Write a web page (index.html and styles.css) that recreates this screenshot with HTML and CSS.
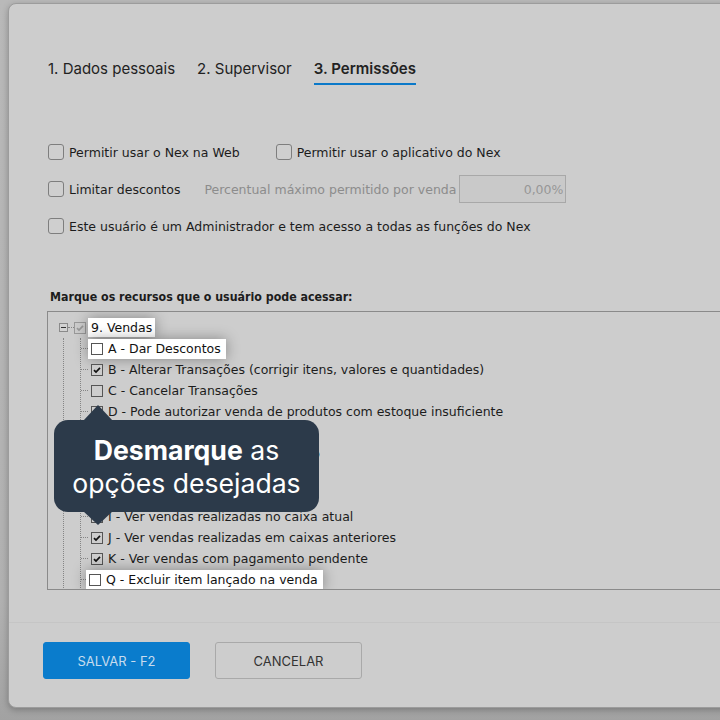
FILE: index.html
```html
<!DOCTYPE html>
<html lang="pt-BR">
<head>
  <meta charset="UTF-8" />
  <title>Usuário - Permissões</title>
  <link rel="stylesheet" href="styles.css">
</head>
<body>

  <div class="modal">
    <nav class="tabs">
      <span class="tab">1. Dados pessoais</span>
      <span class="tab">2. Supervisor</span>
      <span class="tab active">3. Permissões</span>
    </nav>

    <div class="options">
      <div class="opt-row">
        <label class="opt wide"><span class="box"></span>Permitir usar o Nex na Web</label>
        <label class="opt"><span class="box"></span>Permitir usar o aplicativo do Nex</label>
      </div>
      <div class="opt-row">
        <label class="opt"><span class="box"></span>Limitar descontos</label>
        <span class="muted">Percentual máximo permitido por venda</span>
        <input class="pct" type="text" value="0,00%" disabled>
      </div>
      <div class="opt-row">
        <label class="opt"><span class="box"></span>Este usuário é um Administrador e tem acesso a todas as funções do Nex</label>
      </div>
    </div>

    <p class="tree-title">Marque os recursos que o usuário pode acessar:</p>

    <div class="tree">
      <div class="row root">
        <span class="toggle"></span>
        <span class="dots short"></span>
        <span class="cb gray"><svg viewBox="0 0 11 11"><path d="M2.2 5.6 L4.4 7.8 L8.8 3.2"/></svg></span>
        <span class="label hl">9. Vendas</span>
      </div>
      <div class="branch">
        <div class="kids">
          <div class="row"><span class="dots"></span><span class="item hl"><span class="cb"></span>A - Dar Descontos</span></div>
          <div class="row"><span class="dots"></span><span class="item"><span class="cb"><svg viewBox="0 0 11 11"><path d="M2.2 5.6 L4.4 7.8 L8.8 3.2"/></svg></span>B - Alterar Transações (corrigir itens, valores e quantidades)</span></div>
          <div class="row"><span class="dots"></span><span class="item"><span class="cb"></span>C - Cancelar Transações</span></div>
          <div class="row"><span class="dots"></span><span class="item"><span class="cb"><svg viewBox="0 0 11 11"><path d="M2.2 5.6 L4.4 7.8 L8.8 3.2"/></svg></span>D - Pode autorizar venda de produtos com estoque insuficiente</span></div>
          <div class="row"><span class="dots"></span><span class="item"><span class="cb"><svg viewBox="0 0 11 11"><path d="M2.2 5.6 L4.4 7.8 L8.8 3.2"/></svg></span>E - Alterar preço de venda</span></div>
          <div class="row"><span class="dots"></span><span class="item"><span class="cb"><svg viewBox="0 0 11 11"><path d="M2.2 5.6 L4.4 7.8 L8.8 3.2"/></svg></span>F - Vender para cliente bloqueado</span></div>
          <div class="row"><span class="dots"></span><span class="item"><span class="cb"><svg viewBox="0 0 11 11"><path d="M2.2 5.6 L4.4 7.8 L8.8 3.2"/></svg></span>G - Alterar o vendedor do pedido</span></div>
          <div class="row"><span class="dots"></span><span class="item"><span class="cb"><svg viewBox="0 0 11 11"><path d="M2.2 5.6 L4.4 7.8 L8.8 3.2"/></svg></span>H - Reabrir vendas finalizadas</span></div>
          <div class="row"><span class="dots"></span><span class="item"><span class="cb"><svg viewBox="0 0 11 11"><path d="M2.2 5.6 L4.4 7.8 L8.8 3.2"/></svg></span>I - Ver vendas realizadas no caixa atual</span></div>
          <div class="row"><span class="dots"></span><span class="item"><span class="cb"><svg viewBox="0 0 11 11"><path d="M2.2 5.6 L4.4 7.8 L8.8 3.2"/></svg></span>J - Ver vendas realizadas em caixas anteriores</span></div>
          <div class="row"><span class="dots"></span><span class="item"><span class="cb"><svg viewBox="0 0 11 11"><path d="M2.2 5.6 L4.4 7.8 L8.8 3.2"/></svg></span>K - Ver vendas com pagamento pendente</span></div>
          <div class="row"><span class="dots"></span><span class="item hl last"><span class="cb"></span>Q - Excluir item lançado na venda</span></div>
        </div>
      </div>
    </div>

    <div class="hint">
      <strong>Desmarque</strong> as<br>opções desejadas
    </div>

    <div class="footer">
      <button class="btn primary">SALVAR - F2</button>
      <button class="btn">CANCELAR</button>
    </div>
  </div>

</body>
</html>
```

FILE: styles.css
```css
html, body {
  margin: 0;
  height: 720px;
  overflow: hidden;
}

body {
  background: linear-gradient(#b9b9b9, #b1b1b1 600px, #a2a2a2);
  font-family: "DejaVu Sans", sans-serif;
  color: #1c1c1c;
}

.modal {
  position: relative;
  margin: 3px 0 0 8px;
  width: 760px;
  height: 705px;
  background: #cdcdcd;
  border: 1px solid #9c9c9c;
  border-radius: 8px;
  box-shadow: 0 2px 6px rgba(0, 0, 0, 0.25);
  box-sizing: border-box;
}

/* tabs */
.tabs {
  display: flex;
  gap: 22px;
  padding: 55px 0 0 39px;
  font-family: Inter, sans-serif;
  font-size: 15px;
  color: #222;
}

.tab {
  line-height: 20px;
  padding-bottom: 4px;
  border-bottom: 2px solid transparent;
}

.tab.active {
  font-weight: 600;
  border-bottom-color: #0b79c9;
}

/* top options */
.options {
  margin: 53px 0 0 39px;
  display: flex;
  flex-direction: column;
  gap: 9px;
  font-size: 12.5px;
}

.opt-row {
  height: 28px;
  display: flex;
  align-items: center;
}

.opt {
  display: flex;
  align-items: center;
  gap: 5px;
  margin-right: 22px;
}

.opt.wide {
  margin-right: 36px;
}

.box {
  width: 14px;
  height: 14px;
  border: 1px solid #7e7e7e;
  border-radius: 3px;
  background: #cfcfcf;
}

.muted {
  color: #8c8c8c;
  margin-left: 2px;
  margin-right: 3px;
}

.pct {
  width: 107px;
  height: 28px;
  box-sizing: border-box;
  border: 1px solid #a8a8a8;
  background: #c9c9c9;
  color: #979797;
  font: inherit;
  text-align: right;
  padding: 0 2px;
}

.tree-title {
  margin: 49px 0 0 41px;
  font-family: "DejaVu Sans Condensed", "DejaVu Sans", sans-serif;
  font-size: 12.3px;
  font-weight: bold;
  line-height: 16px;
}

/* tree */
.tree {
  margin: 6px 0 0 38px;
  height: 279px;
  border: 1px solid #8a8a8a;
  box-sizing: border-box;
  overflow: hidden;
  font-size: 12.5px;
  padding-top: 5px;
}

.row {
  height: 21px;
  display: flex;
  align-items: center;
  white-space: nowrap;
}

.root {
  padding-left: 11px;
}

.toggle {
  position: relative;
  width: 7px;
  height: 7px;
  border: 1px solid #8a8a8a;
  background: #d2d2d2;
}

.toggle::after {
  content: "";
  position: absolute;
  left: 1px;
  right: 1px;
  top: 3px;
  border-top: 1px solid #333;
}

.dots {
  width: 7px;
  border-top: 1px dotted #858585;
}

.dots.short {
  width: 6px;
}

.cb {
  width: 10px;
  height: 10px;
  border: 1px solid #555;
  background: #cdcdcd;
  flex: none;
}

.cb svg {
  display: block;
  width: 10px;
  height: 10px;
  fill: none;
  stroke: #111;
  stroke-width: 1.9;
}

.cb.gray {
  border-color: #999;
}

.cb.gray svg {
  stroke: #9a9a9a;
}

.label {
  margin-left: 2px;
  padding: 0 3px;
  line-height: 19px;
}

.item {
  display: flex;
  align-items: center;
  gap: 5px;
  padding: 0 5px 0 3px;
  line-height: 20px;
}

.hl {
  background: #fff;
  color: #111;
  box-shadow: 0 0 14px rgba(0, 0, 0, 0.35);
}

.hl .cb {
  background: #fff;
}

.item.last {
  margin-left: -2px;
}

.branch {
  margin-left: 15px;
  padding-left: 16px;
  border-left: 1px dotted #858585;
}

.kids {
  border-left: 1px dotted #858585;
}

/* hint bubble */
.hint {
  position: absolute;
  left: 45px;
  top: 416px;
  width: 265px;
  height: 92px;
  box-sizing: border-box;
  padding-top: 14px;
  background: #2c3a4a;
  border-radius: 14px;
  color: #fff;
  font-family: Inter, sans-serif;
  font-size: 26.6px;
  line-height: 33px;
  text-align: center;
}

.hint strong {
  font-weight: 700;
}

.hint::before,
.hint::after {
  content: "";
  position: absolute;
  left: 29px;
  border-left: 15px solid transparent;
  border-right: 15px solid transparent;
}

.hint::before {
  top: -15px;
  border-bottom: 16px solid #2c3a4a;
}

.hint::after {
  bottom: -13px;
  border-top: 14px solid #2c3a4a;
}

/* footer */
.footer {
  margin-top: 32px;
  border-top: 1px solid #c5c5c5;
  padding: 19px 0 0 34px;
  display: flex;
  gap: 25px;
}

.btn {
  width: 147px;
  height: 37px;
  border: 1px solid #a9a9a9;
  border-radius: 3px;
  background: transparent;
  font-family: Inter, sans-serif;
  font-size: 13px;
  color: #333;
}

.btn.primary {
  background: #0a7ccc;
  border-color: #0a7ccc;
  color: #c8dcee;
}
```
